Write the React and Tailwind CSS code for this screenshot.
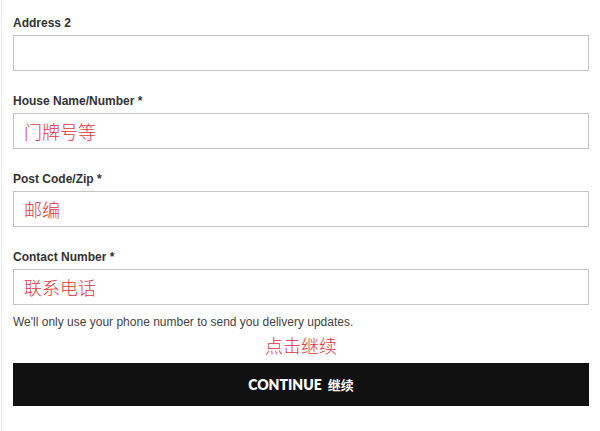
import React from 'react';

const fields = [
  { label: 'Address 2', placeholder: '' },
  { label: 'House Name/Number *', placeholder: '门牌号等' },
  { label: 'Post Code/Zip *', placeholder: '邮编' },
  { label: 'Contact Number *', placeholder: '联系电话' },
];

const Field = ({ label, placeholder, last }) => (
  <div className={last ? '' : 'mb-[23px]'}>
    <label className="block text-[12px] leading-[14px] font-bold text-[#333] mb-[5px]">{label}</label>
    <div className="h-[36px] border border-[#c6c6c6] bg-white flex items-center px-[10px]">
      <span className="text-[18px] leading-[20px] font-light text-[#e0353d] font-['Noto_Sans_CJK_SC',sans-serif]">{placeholder}</span>
    </div>
  </div>
);

export default function App() {
  return (
    <div className="w-[600px] h-[431px] bg-white font-['Liberation_Sans','Noto_Sans_CJK_SC',sans-serif]">
      <div className="ml-[1px] h-full border-l border-[#ededed] pl-[11px] pr-[11px] pt-[16px]">
        {fields.map((f, i) => (
          <Field key={f.label} {...f} last={i === fields.length - 1} />
        ))}
        <p className="mt-[10px] text-[12px] leading-[14px] text-[#444]">
          We'll only use your phone number to send you delivery updates.
        </p>
        <div className="mt-[6px] h-[20px] text-center text-[18px] leading-[20px] font-light text-[#e0353d] font-['Noto_Sans_CJK_SC',sans-serif]">
          点击继续
        </div>
        <button className="mt-[8px] w-full h-[43px] bg-[#111] text-white flex items-center justify-center gap-[6px]">
          <span className="font-['Lato',sans-serif] font-extrabold text-[14px]">CONTINUE</span>
          <span className="font-['Noto_Sans_CJK_SC',sans-serif] font-bold text-[13px]">继续</span>
        </button>
      </div>
    </div>
  );
}
